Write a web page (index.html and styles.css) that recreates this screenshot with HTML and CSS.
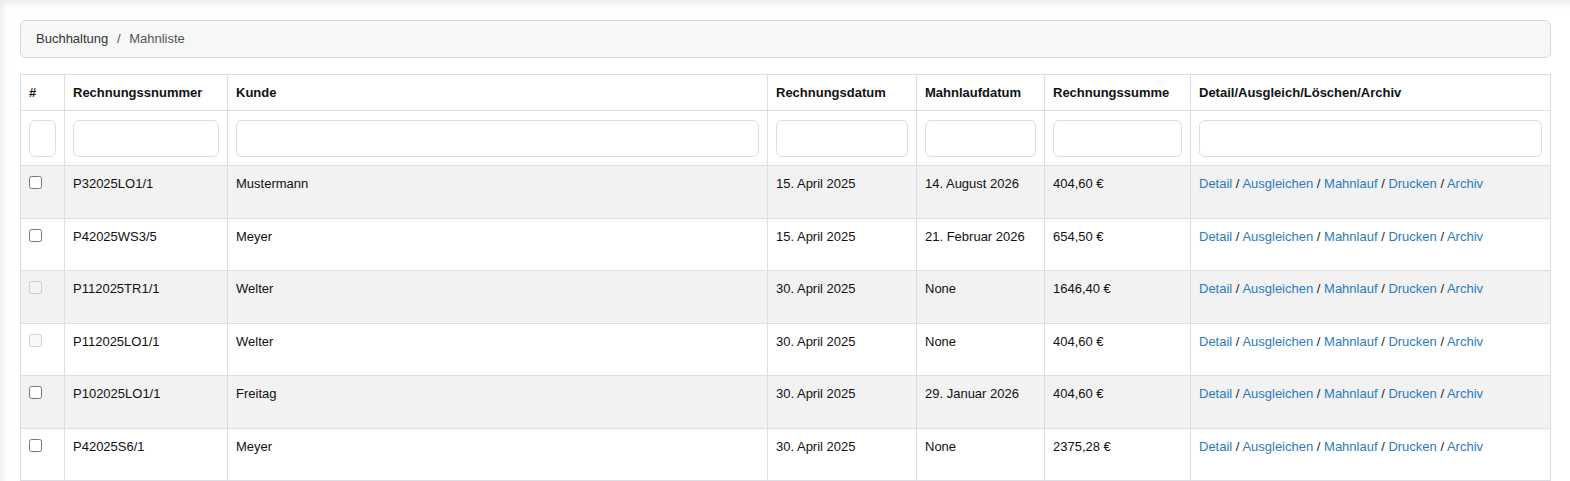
FILE: index.html
```html
<!DOCTYPE html>
<html lang="de">
<head>
    <meta charset="UTF-8">
    <meta name="viewport" content="width=device-width, initial-scale=1.0">
    <title>Mahnliste</title>
    <link rel="stylesheet" href="styles.css">
</head>
<body>

    <div class="main">
        <nav class="breadcrumb">
            <span class="crumb">Buchhaltung</span>
            <span class="sep">/</span>
            <span class="crumb active">Mahnliste</span>
        </nav>

        <table class="list">
            <colgroup>
                <col style="width: 44px">
                <col style="width: 163px">
                <col style="width: 540px">
                <col style="width: 149px">
                <col style="width: 128px">
                <col style="width: 146px">
                <col>
            </colgroup>
            <thead>
                <tr class="head">
                    <th>#</th>
                    <th>Rechnungssnummer</th>
                    <th>Kunde</th>
                    <th>Rechnungsdatum</th>
                    <th>Mahnlaufdatum</th>
                    <th>Rechnungssumme</th>
                    <th>Detail/Ausgleich/Löschen/Archiv</th>
                </tr>
                <tr class="filter">
                    <td><input type="text" class="filter-box"></td>
                    <td><input type="text" class="filter-box"></td>
                    <td><input type="text" class="filter-box"></td>
                    <td><input type="text" class="filter-box"></td>
                    <td><input type="text" class="filter-box"></td>
                    <td><input type="text" class="filter-box"></td>
                    <td><input type="text" class="filter-box"></td>
                </tr>
            </thead>
            <tbody>
                <tr>
                    <td><input type="checkbox"></td>
                    <td>P32025LO1/1</td>
                    <td>Mustermann</td>
                    <td>15. April 2025</td>
                    <td>14. August 2026</td>
                    <td>404,60 €</td>
                    <td class="actions"><a href="#">Detail</a> / <a href="#">Ausgleichen</a> / <a href="#">Mahnlauf</a> / <a href="#">Drucken</a> / <a href="#">Archiv</a></td>
                </tr>
                <tr>
                    <td><input type="checkbox"></td>
                    <td>P42025WS3/5</td>
                    <td>Meyer</td>
                    <td>15. April 2025</td>
                    <td>21. Februar 2026</td>
                    <td>654,50 €</td>
                    <td class="actions"><a href="#">Detail</a> / <a href="#">Ausgleichen</a> / <a href="#">Mahnlauf</a> / <a href="#">Drucken</a> / <a href="#">Archiv</a></td>
                </tr>
                <tr>
                    <td><input type="checkbox" disabled></td>
                    <td>P112025TR1/1</td>
                    <td>Welter</td>
                    <td>30. April 2025</td>
                    <td>None</td>
                    <td>1646,40 €</td>
                    <td class="actions"><a href="#">Detail</a> / <a href="#">Ausgleichen</a> / <a href="#">Mahnlauf</a> / <a href="#">Drucken</a> / <a href="#">Archiv</a></td>
                </tr>
                <tr>
                    <td><input type="checkbox" disabled></td>
                    <td>P112025LO1/1</td>
                    <td>Welter</td>
                    <td>30. April 2025</td>
                    <td>None</td>
                    <td>404,60 €</td>
                    <td class="actions"><a href="#">Detail</a> / <a href="#">Ausgleichen</a> / <a href="#">Mahnlauf</a> / <a href="#">Drucken</a> / <a href="#">Archiv</a></td>
                </tr>
                <tr>
                    <td><input type="checkbox"></td>
                    <td>P102025LO1/1</td>
                    <td>Freitag</td>
                    <td>30. April 2025</td>
                    <td>29. Januar 2026</td>
                    <td>404,60 €</td>
                    <td class="actions"><a href="#">Detail</a> / <a href="#">Ausgleichen</a> / <a href="#">Mahnlauf</a> / <a href="#">Drucken</a> / <a href="#">Archiv</a></td>
                </tr>
                <tr>
                    <td><input type="checkbox"></td>
                    <td>P42025S6/1</td>
                    <td>Meyer</td>
                    <td>30. April 2025</td>
                    <td>None</td>
                    <td>2375,28 €</td>
                    <td class="actions"><a href="#">Detail</a> / <a href="#">Ausgleichen</a> / <a href="#">Mahnlauf</a> / <a href="#">Drucken</a> / <a href="#">Archiv</a></td>
                </tr>
            </tbody>
        </table>
    </div>

</body>
</html>
```

FILE: styles.css
```css
/* Global Styles */
body {
    font-family: "Liberation Sans", Arial, sans-serif;
    font-size: 13px;
    line-height: 20px;
    color: #111;
    margin: 0;
    padding: 0;
    background-color: #fff;
}

/* Content area with a soft inset shadow at top and left */
.main {
    min-height: 100vh;
    box-sizing: border-box;
    padding: 20px 19px 20px 20px;
    box-shadow: inset 6px 7px 8px -4px rgba(0, 0, 0, 0.09);
}

/* Breadcrumb */
.breadcrumb {
    background-color: #f6f8f7;
    border: 1px solid #d6d8d8;
    border-radius: 6px;
    padding: 8px 15px;
    line-height: 20px;
    margin-bottom: 16px;
    color: #333;
}

.breadcrumb .sep {
    color: #555;
    padding: 0 5px;
}

.breadcrumb .active {
    color: #555;
}

/* Table */
.list {
    width: 100%;
    table-layout: fixed;
    border-collapse: collapse;
}

.list th,
.list td {
    border: 1px solid #dddee3;
    padding: 8px 8px;
    text-align: left;
    vertical-align: top;
}

.list th {
    font-weight: bold;
    padding-top: 8px;
    padding-bottom: 7px;
}

.list .filter td {
    height: 38px;
    vertical-align: middle;
}

.list tbody td {
    height: 35.5px;
}

.list tbody tr:nth-child(odd) {
    background-color: #f2f2f2;
}

/* Filter inputs */
.filter-box {
    display: block;
    width: 100%;
    height: 37px;
    box-sizing: border-box;
    border: 1px solid #dcdde0;
    border-radius: 6px;
    background-color: #fff;
    font: inherit;
    padding: 6px 10px;
}

/* Row checkbox */
.list input[type="checkbox"] {
    width: 13px;
    height: 13px;
    margin: 2px 0 0 0;
}

/* Action links */
.actions a {
    color: #2c7bbd;
    text-decoration: none;
}

.actions {
    color: #222;
}
```
